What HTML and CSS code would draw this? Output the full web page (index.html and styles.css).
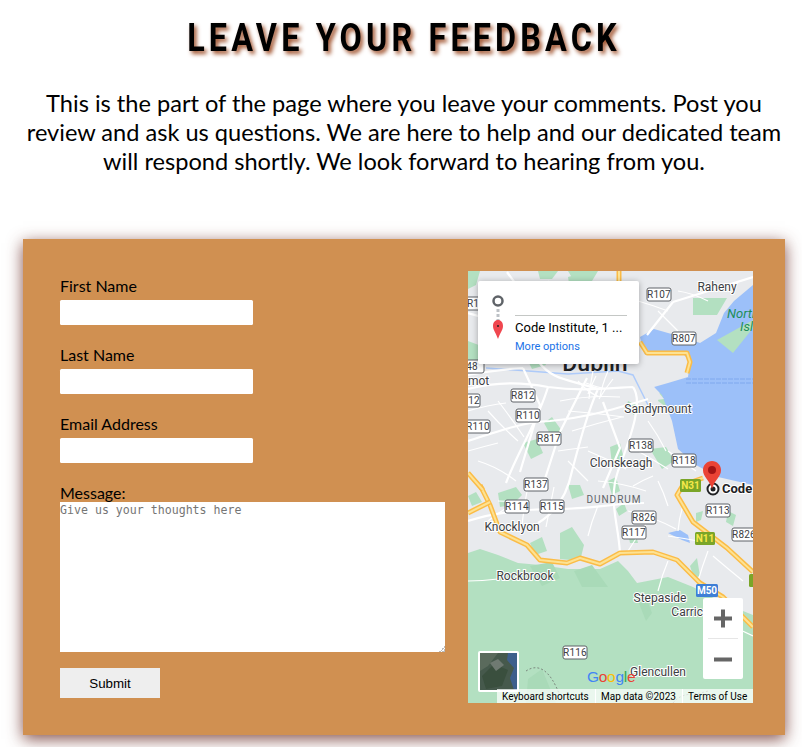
FILE: index.html
```html
<!DOCTYPE html>
<html lang="en">
<head>
<meta charset="utf-8">
<title>Leave your feedback</title>
<link rel="stylesheet" href="styles.css">
</head>
<body>
<header class="intro">
  <h1 class="title">LEAVE YOUR FEEDBACK</h1>
  <p class="lead">This is the part of the page where you leave your comments. Post you review and ask us questions. We are here to help and our dedicated team will respond shortly. We look forward to hearing from you.</p>
</header>
<section class="card">
  <form class="form">
    <label class="field"><span class="label">First Name</span><input class="input" type="text"></label>
    <label class="field"><span class="label">Last Name</span><input class="input" type="text"></label>
    <label class="field"><span class="label">Email Address</span><input class="input" type="email"></label>
    <label class="field field-message"><span class="label">Message:</span><textarea class="message" placeholder="Give us your thoughts here"></textarea></label>
    <button class="submit" type="button">Submit</button>
  </form>
  <div class="map">
    <svg class="map-svg" width="285" height="432" viewBox="0 0 285 432">
      <rect width="285" height="432" fill="#e8eaed"/>
      <!-- parks -->
      <path class="park" d="M0,282 L12,278 30,284 50,292 72,294 100,298 132,298 150,290 160,300 169,312 200,306 225,316 255,332 285,344 V432 H0Z"/>
      <path class="park" d="M0,0H12L8,14 0,18Z M70,0H90L84,8 72,8Z M225,27L259,27 249,44 225,44Z M95,40L112,34 116,46 100,52Z M0,70L16,76 12,92 0,90Z M55,172l14,-4 6,14 -12,6Z M76,152l8,-6 10,14 -8,10Z M142,176l10,-4 4,16 -12,6Z M182,178l16,-2 8,14 -12,8Z M140,210l8,-4 4,14 -8,4Z M100,6l14,-4 2,14 -14,2Z M100,0h30l-6,10 -18,0Z M30,222l18,-6 6,8 -10,10 -12,2Z M100,214l12,0 4,10 -12,4Z M148,238l8,-6 3,8 -8,5Z M228,242l7,-2 -2,9 -5,2Z M260,240l8,4 -3,11 -7,-4Z M60,90l14,-6 4,10 -14,4Z M192,120l10,6 -4,10 -8,-6Z M160,130l8,4 -2,10 -8,-6Z M48,46l10,-6 4,10 -12,4Z M92,262l12,-6 12,18 -4,16 -20,-2Z M62,272l12,-6 5,14 -12,4Z M0,225l8,-4 6,10 -10,4Z M222,295l7,-8 3,18 -6,2Z M160,262l8,2 2,8 -8,0Z"/>
      <path class="park-dark" d="M62,295l22,-4 8,16 -18,8Z M106,300l18,-6 16,22 -26,0Z M60,408l14,-10 14,34 -30,0Z M170,330l8,-4 6,16 -6,8Z"/>
      <!-- sea -->
      <path class="sea" d="M285,14 L266,30 256,42 248,62 232,72 215,66 200,62 186,58 172,66 176,82 186,96 190,108 184,114 194,124 204,150 210,178 228,194 250,206 285,214Z"/>
      <path class="park" d="M285,49 L249,69 265,82 285,57Z"/>
      <path class="land" d="M142,88 L172,84 178,84 216,84 222,90 220,106 200,112 186,116 196,128 180,130 168,112 140,100Z"/>
      <path class="sea-lane" d="M218,108H285M218,112H285"/>
      <path class="river" d="M18,97 L60,100 100,103 150,100 165,104 172,118 182,138"/>
      <path class="sea" d="M200,262 l12,-3 8,5 2,8 -8,-3Z"/>
      <!-- roads -->
      <path class="road" d="M39,1C48,14 58,26 69,37 M152,11L149,67 M205,31L179,64 M205,31L285,6 M0,104C20,100 40,98 55,97 M55,97L72,134 52,201 M119,107L92,161 75,214 M135,131L152,177 135,217 M0,42C30,50 60,60 70,90 85,110 100,108 130,118 M70,37C80,60 92,80 100,100 M0,118C30,110 60,112 80,116 110,120 130,118 165,116 M130,118C120,140 112,170 104,200 100,220 90,240 70,252 M165,116C175,130 165,160 150,200 140,230 150,250 152,282 M80,116C70,150 50,180 38,212 M0,170C30,160 60,150 82,150 120,146 140,140 180,128 M0,250C30,240 60,238 90,238 120,238 150,232 176,232 210,225 M0,262C40,258 70,258 100,262 130,270 150,276 152,282 M176,232C180,250 185,270 185,281 M185,281C210,300 230,310 232,312 M152,282C170,300 176,320 185,325 M72,289C66,310 62,322 64,340 66,350 88,366 100,380 125,396 150,404 170,415 M37,296C38,320 35,350 38,365 36,380 40,395 36,420 M184,324L185,345 183,400 M218,340C235,370 245,395 252,420 M160,150C190,170 205,190 209,224 M105,120C115,130 130,135 145,130 M60,185C90,195 130,205 150,200 M230,240L285,262 M215,270L285,320"/>
      <path class="road-thin" d="M110,110q10,12 22,16 M125,100q-3,14 -4,28 M140,100q-6,14 -8,26 M92,130q30,-6 60,-4 M100,140q28,2 56,6 M104,160q26,-8 50,-14 M30,130q14,18 26,36 M10,190q20,6 38,20 M170,180q14,8 30,18 M180,150q10,14 18,30 M120,180q20,8 38,18 M0,140q20,-6 38,-8 M60,30q30,-8 58,-10 M30,60q20,-8 38,-10 M210,20q14,2 30,10 M170,30q14,4 30,10 M130,210q24,2 48,10 M160,240q26,6 48,18 M180,250q-10,14 -20,30 M60,215q-4,20 -6,40 M86,216q-4,20 -8,40 M200,290q-6,14 -10,30 M240,280q-6,16 -10,30 M200,180q14,10 28,20 M118,112q10,4 20,6 M128,105q-4,8 -8,18 M145,108q-8,10 -14,20 M20,60q10,16 20,30 M40,70q10,-10 20,-20 M80,10q14,14 30,30 M120,40q14,-6 30,-10 M115,60q18,4 35,10 M190,40q10,10 20,20 M0,180q14,-4 30,-8 M20,140q14,16 30,30 M90,180q14,-2 30,-4 M100,190q10,10 20,20 M30,230q14,0 30,4 M20,250q10,-8 20,-14 M130,235q-6,14 -10,30 M165,215q10,-6 20,-10 M190,210q6,12 10,25 M215,235q-4,12 -5,25 M245,285q14,12 30,25 M200,265q14,2 30,5 M0,310q14,0 30,-2 M250,350q18,6 35,15"/>
      <!-- motorways -->
      <path class="hw-o" d="M12,214L22,234 32,261 59,274 72,289 99,292 112,287 132,293 152,282 185,281 209,289 232,312 255,326 285,356"/>
      <path class="hw-i" d="M12,214L22,234 32,261 59,274 72,289 99,292 112,287 132,293 152,282 185,281 209,289 232,312 255,326 285,356"/>
      <path class="hw-o" d="M0,242L22,231 M235,207L215,214 209,224 225,251 259,277 285,301 M172,71L179,82 219,82 222,91 219,102 M151,0V11 M0,202L15,219"/>
      <path class="hw-i" d="M0,242L22,231 M235,207L215,214 209,224 225,251 259,277 285,301 M172,71L179,82 219,82 222,91 219,102 M151,0V11 M0,202L15,219"/>
      <path class="trail" d="M58,400C70,392 82,398 92,425 M205,432C215,420 225,425 240,420"/>
      <!-- route shields -->
      <g class="shields">
        <rect x="-6" y="26" width="23" height="13"/><text x="5" y="36">R1</text>
        <rect x="179" y="17" width="24" height="13"/><text x="191" y="27">R107</text>
        <rect x="204" y="61" width="24" height="13"/><text x="216" y="71">R807</text>
        <rect x="-8" y="89" width="24" height="13"/><text x="4" y="99">48</text>
        <rect x="43" y="118" width="24" height="13"/><text x="55" y="128">R812</text>
        <rect x="-8" y="123" width="20" height="13"/><text x="6" y="133">12</text>
        <rect x="48" y="138" width="24" height="13"/><text x="60" y="148">R110</text>
        <rect x="-2" y="149" width="24" height="13"/><text x="10" y="159">R110</text>
        <rect x="69" y="161" width="24" height="13"/><text x="81" y="171">R817</text>
        <rect x="161" y="168" width="24" height="13"/><text x="173" y="178">R138</text>
        <rect x="204" y="183" width="24" height="13"/><text x="216" y="193">R118</text>
        <rect x="56" y="207" width="24" height="13"/><text x="68" y="217">R137</text>
        <rect x="37" y="229" width="24" height="13"/><text x="49" y="239">R114</text>
        <rect x="72" y="229" width="24" height="13"/><text x="84" y="239">R115</text>
        <rect x="164" y="240" width="24" height="13"/><text x="176" y="250">R826</text>
        <rect x="238" y="233" width="24" height="13"/><text x="250" y="243">R113</text>
        <rect x="154" y="255" width="24" height="13"/><text x="166" y="265">R117</text>
        <rect x="264" y="257" width="24" height="13"/><text x="276" y="267">R826</text>
        <rect x="95" y="375" width="24" height="13"/><text x="107" y="385">R116</text>
      </g>
      <g class="badges">
        <rect class="badge-green" x="212" y="208" width="21" height="13"/><text x="222.500" y="218">N31</text>
        <rect class="badge-green" x="227" y="261" width="20" height="13"/><text x="237" y="271">N11</text>
        <rect class="badge-green" x="281" y="303" width="12" height="13"/>
        <rect class="badge-blue" x="228" y="313" width="22" height="13"/><text class="badge-white" x="239" y="323">M50</text>
      </g>
      <!-- place names -->
      <g class="places">
        <text x="249" y="20">Raheny</text>
        <text class="halo" x="0" y="114">mot</text>
        <text x="190" y="142">Sandymount</text>
        <text x="153" y="196">Clonskeagh</text>
        <text x="44" y="260">Knocklyon</text>
        <text x="57" y="309">Rockbrook</text>
        <text x="192" y="331">Stepaside</text>
        <text x="235" y="345" class="end">Carric</text>
        <text x="190" y="405">Glencullen</text>
      </g>
      <text class="district" x="146" y="232">DUNDRUM</text>
      <text class="city" x="127" y="100">Dublin</text>
      <text class="island" x="259" y="47">North</text>
      <text class="island" x="272" y="60">Isl</text>
      <text class="dest" x="254" y="222">Code</text>
      <!-- destination marker -->
      <circle class="target" cx="245" cy="218" r="5.500"/>
      <circle cx="245" cy="218" r="2.500" fill="#202124"/>
      <path class="pin-big" d="M244,190c-5,0-9,4-9,9 0,7 6,9 9,19 3,-10 9,-12 9,-19 0,-5-4-9-9-9Z"/>
      <circle cx="244" cy="199" r="4" fill="#a31414"/>
      <!-- directions panel -->
      <rect class="panel" x="10" y="10" width="161" height="83" rx="2"/>
      <circle class="origin" cx="30" cy="30" r="4.500"/>
      <path class="dots" d="M30,38V50"/>
      <path class="pin-small" d="M30,49c-3,0-5,2.500-5,6 0,4 3,7 5,13 2,-6 5,-9 5,-13 0,-3.500-2-6-5-6Z"/>
      <circle cx="30" cy="55" r="1" fill="#222"/>
      <path class="rule" d="M47,44.500H159"/>
      <text class="dest-name" x="47" y="61">Code Institute, 1 ...</text>
      <text class="more" x="47" y="79">More options</text>
      <!-- Google logo -->
      <text class="logo" x="119" y="411"><tspan fill="#4285f4">G</tspan><tspan fill="#ea4335">o</tspan><tspan fill="#fbbc05">o</tspan><tspan fill="#4285f4">g</tspan><tspan fill="#34a853">l</tspan><tspan fill="#ea4335">e</tspan></text>
      <!-- satellite thumbnail -->
      <rect x="10" y="380" width="41" height="41" rx="2" fill="#fff"/>
      <rect x="12" y="382" width="37" height="37" fill="#46594c"/>
      <path d="M12,382H30L20,395 12,400Z" fill="#5a6a5c"/>
      <path d="M14,405l12,-12 14,6 -6,16 -16,3Z" fill="#3a4f3e"/>
      <path d="M22,392l8,-4 6,6 -8,6Z" fill="#6f7a72"/>
      <path d="M40,382h9v37h-3l-4,-12 4,-10 -7,-8Z" fill="#3e5f8c"/>
      <!-- zoom control -->
      <rect x="235" y="327" width="40" height="81" rx="2" fill="#fff"/>
      <path class="zoom-rule" d="M240,367.500H270"/>
      <path class="zoom-icon" d="M246,347.500H264M255,338.500V356.500M246,388.500H264"/>
      <!-- attribution -->
      <rect class="attr-bg" x="29" y="418" width="256" height="14"/>
      <path class="attr-rule" d="M127.500,418V432M214.500,418V432"/>
      <text class="attr" x="34" y="429">Keyboard shortcuts</text>
      <text class="attr" x="133" y="429">Map data ©2023</text>
      <text class="attr" x="220" y="429">Terms of Use</text>
    </svg>
  </div>
</section>
</body>
</html>
```
FILE: styles.css
```css
html, body { margin: 0; padding: 0; }
body {
  background: #fff;
  color: #000;
  font-family: "Lato", sans-serif;
  height: 747px;
  overflow: hidden;
}
.intro {
  padding: 17px 17px 0 23px;
  text-align: center;
}
.title {
  margin: 0;
  font-family: "Roboto", sans-serif;
  font-weight: 700;
  font-size: 39px;
  line-height: 42px;
  letter-spacing: 5px;
  color: #000;
  text-shadow: 3px 3px 5px #a0522d;
  transform: scaleX(.83);
}
.lead {
  margin: 30px 0 0;
  font-size: 23.6px;
  line-height: 29px;
}
.card {
  box-sizing: border-box;
  display: grid;
  grid-template-columns: 385px 285px;
  column-gap: 23px;
  width: 762px;
  height: 496px;
  margin: 63px 0 0 23px;
  padding: 32px 32px 32px 37px;
  background: #d09051;
  box-shadow: 0 4px 15px rgba(110, 50, 45, .85);
}
.form {
  display: flex;
  flex-direction: column;
  align-items: flex-start;
  padding-top: 5px;
}
.field {
  display: flex;
  flex-direction: column;
  align-items: flex-start;
  margin-bottom: 20px;
}
.label {
  font-size: 16px;
  line-height: 19px;
  margin-bottom: 5px;
}
.input {
  box-sizing: border-box;
  width: 193px;
  height: 25px;
  border: 0;
  border-radius: 1.500px;
  padding: 0 4px;
  background: #fff;
}
.field-message { margin-bottom: 16px; }
.field-message .label { margin-bottom: 0; }
.message {
  box-sizing: border-box;
  display: block;
  width: 385px;
  height: 150px;
  border: 0;
  padding: 2px 0;
  background: #fff;
  font-family: "DejaVu Sans Mono", monospace;
  font-size: 11.6px;
  line-height: 13px;
}
.message::placeholder { color: #757575; }
.message::-webkit-resizer {
  background: linear-gradient(135deg, transparent 50%, #bbb 50%, #bbb 62%, #fff 62%, #fff 75%, #bbb 75%) no-repeat right bottom / 6px 6px;
}
.submit {
  width: 100px;
  height: 30px;
  border: 0;
  background: #eee;
  color: #000;
  font-family: "Liberation Sans", sans-serif;
  font-size: 13.33px;
  padding: 0;
}
.map { width: 285px; height: 432px; }
.map-svg { display: block; font-family: "Roboto", sans-serif; }
.park { fill: #b3e0c1; }
.park-dark { fill: #a9dab8; }
.sea { fill: #9cc0f9; }
.land { fill: #e8eaed; }
.sea-lane { fill: none; stroke: #7ea8ee; stroke-width: 1; stroke-dasharray: 5 1; }
.river { fill: none; stroke: #aecbfa; stroke-width: 1.500; }
.road { fill: none; stroke: #fff; stroke-width: 2.200; }
.road-thin { fill: none; stroke: #fff; stroke-width: 1.200; }
.hw-o { fill: none; stroke: #fbbc46; stroke-width: 5; stroke-linejoin: round; }
.hw-i { fill: none; stroke: #fde293; stroke-width: 2; stroke-linejoin: round; }
.trail { fill: none; stroke: #7d8a80; stroke-width: 1; stroke-dasharray: 2 2; }
.shields rect { fill: #fff; stroke: #5f6368; stroke-width: 1; rx: 2px; }
.shields text { font-size: 10px; text-anchor: middle; fill: #3c4043; letter-spacing: .2px; }
.badges text { font-size: 10px; font-weight: 700; text-anchor: middle; fill: #f6e84a; }
.badges .badge-white { fill: #fff; }
.badge-green { fill: #7aa528; rx: 1.500px; }
.badge-blue { fill: #3f7fd6; rx: 1.500px; }
.places text {
  font-size: 12px;
  text-anchor: middle;
  fill: #3c4043;
  paint-order: stroke;
  stroke: #fff;
  stroke-width: 2px;
}
.places .halo { text-anchor: start; }
.places .end { text-anchor: end; }
.district { font-size: 10px; letter-spacing: 1px; text-anchor: middle; fill: #5f6368; }
.city { font-size: 23px; font-weight: 500; fill: #202124; text-anchor: middle; }
.island { font-size: 13px; font-style: italic; fill: #1e8e5a; }
.dest { font-size: 13px; font-weight: 700; fill: #202124; paint-order: stroke; stroke: #fff; stroke-width: 2px; }
.target { fill: #fff; stroke: #202124; stroke-width: 2; }
.pin-big { fill: #ea4335; }
.panel { fill: #fff; filter: drop-shadow(0 1px 3px rgba(0, 0, 0, .3)); }
.origin { fill: none; stroke: #5f6368; stroke-width: 2.500; }
.dots { stroke: #bdc1c6; stroke-width: 3; stroke-dasharray: 3 2; fill: none; }
.pin-small { fill: #f0474f; }
.rule { stroke: #c4c7c5; stroke-width: 1; }
.dest-name { font-size: 13px; fill: #000; }
.more { font-size: 11px; fill: #1a73e8; }
.logo { font-family: "Liberation Sans", sans-serif; font-size: 15.500px; letter-spacing: -.3px; }
.zoom-rule { stroke: #e6e6e6; stroke-width: 1; }
.zoom-icon { stroke: #666; stroke-width: 4; fill: none; }
.attr-bg { fill: rgba(255, 255, 255, .72); }
.attr-rule { stroke: #fff; stroke-width: 1; }
.attr { font-size: 10px; fill: #000; }
```
